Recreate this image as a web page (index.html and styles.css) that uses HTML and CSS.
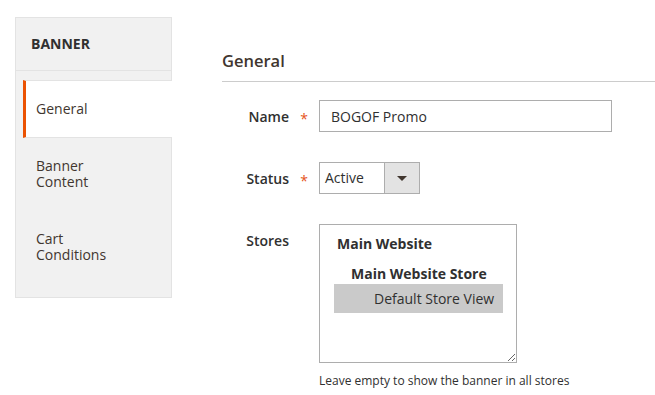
FILE: index.html
```html
<!DOCTYPE html>
<html lang="en">
<head>
    <meta charset="UTF-8">
    <meta name="viewport" content="width=device-width, initial-scale=1.0">
    <title>Banner - General</title>
    <link rel="stylesheet" href="styles.css">
</head>
<body>
    <div class="page">
        <div class="sidebar">
            <div class="sidebar-title">BANNER</div>
            <ul class="tabs">
                <li class="tab active">General</li>
                <li class="tab">Banner<br>Content</li>
                <li class="tab">Cart<br>Conditions</li>
            </ul>
        </div>

        <div class="main">
            <h2 class="section-title">General</h2>

            <form class="fieldset">
                <div class="field">
                    <label class="field-label" for="bannerName">Name</label>
                    <span class="required">*</span>
                    <input class="text-input" type="text" id="bannerName" value="BOGOF Promo">
                </div>

                <div class="field">
                    <label class="field-label">Status</label>
                    <span class="required">*</span>
                    <div class="select">
                        <span class="select-value">Active</span>
                        <span class="select-button"><span class="arrow"></span></span>
                    </div>
                </div>

                <div class="field field-top">
                    <label class="field-label">Stores</label>
                    <span></span>
                    <div>
                        <div class="multiselect">
                            <div class="group-website">Main Website</div>
                            <div class="group-store">Main Website Store</div>
                            <div class="option selected">Default Store View</div>
                        </div>
                        <div class="note">Leave empty to show the banner in all stores</div>
                    </div>
                </div>
            </form>
        </div>
    </div>
</body>
</html>
```

FILE: styles.css
```css
body {
    margin: 0;
    font-family: "Open Sans", "Liberation Sans", sans-serif;
    font-size: 14px;
    color: #303030;
    background: #fff;
}

.page {
    display: flex;
    gap: 50px;
    padding: 17px 0 0 15px;
}

/* left tabs */
.sidebar {
    width: 157px;
    box-sizing: border-box;
    background-color: #f1f1f1;
    border: 1px solid #e3e3e3;
    align-self: flex-start;
    padding-bottom: 13px;
}

.sidebar-title {
    font-weight: 700;
    line-height: 16px;
    color: #303030;
    padding: 18px 15px 18px;
    border-bottom: 1px solid #e3e3e3;
}

.tabs {
    list-style: none;
    margin: 9px 0 0;
    padding: 0;
}

.tab {
    line-height: 16px;
    padding: 20px 20px 21px;
    color: #41362f;
}

.tab.active {
    background: #fff;
    margin-left: 7px;
    margin-right: -1px;
    padding: 20px 20px 20px 10px;
    border-left: 3px solid #eb5202;
    border-top: 1px solid #e3e3e3;
    border-bottom: 1px solid #e3e3e3;
}

/* main form */
.main {
    flex: 1;
}

.section-title {
    margin: 33px 0 0;
    font-size: 16.5px;
    font-weight: 600;
    line-height: 22px;
    color: #41362f;
    padding-bottom: 9px;
    border-bottom: 1px solid #cccccc;
}

.fieldset {
    margin-top: 18px;
    display: flex;
    flex-direction: column;
    gap: 30px;
}

.field {
    display: grid;
    grid-template-columns: 67px 30px auto;
    align-items: center;
}

.field-top {
    align-items: start;
}

.field-label {
    text-align: right;
    font-weight: 600;
    line-height: 18px;
    padding-top: 1px;
}

.field-top .field-label {
    padding-top: 8px;
}

.required {
    color: #e5531a;
    text-align: center;
    font-size: 14px;
    padding-top: 4px;
}

.text-input {
    width: 293px;
    height: 32px;
    box-sizing: border-box;
    border: 1px solid #adadad;
    padding: 0 11px;
    font-family: inherit;
    font-size: 14px;
    color: #303030;
    margin: 0;
}

.select {
    display: flex;
    width: 101px;
    height: 32px;
    box-sizing: border-box;
    border: 1px solid #adadad;
}

.select-value {
    flex: 1;
    padding-left: 5px;
    line-height: 30px;
}

.select-button {
    width: 34px;
    background: #e3e3e3;
    border-left: 1px solid #adadad;
    display: flex;
    align-items: center;
    justify-content: center;
}

.arrow {
    width: 0;
    height: 0;
    border-left: 5px solid transparent;
    border-right: 5px solid transparent;
    border-top: 5px solid #41362f;
}

.multiselect {
    width: 198px;
    height: 139px;
    box-sizing: border-box;
    border: 1px solid #adadad;
    padding: 9px 13px 0 14px;
    resize: both;
    overflow: auto;
}

.group-website,
.group-store {
    font-weight: 700;
    line-height: 20px;
    color: #303030;
}

.group-website {
    padding-left: 3px;
    margin-bottom: 10px;
}

.group-store {
    padding-left: 17px;
}

.option {
    line-height: 29px;
    padding-left: 40px;
}

.option.selected {
    background-color: #cacaca;
}

.note {
    font-size: 12px;
    line-height: 16px;
    margin-top: 10px;
    color: #303030;
}
```
